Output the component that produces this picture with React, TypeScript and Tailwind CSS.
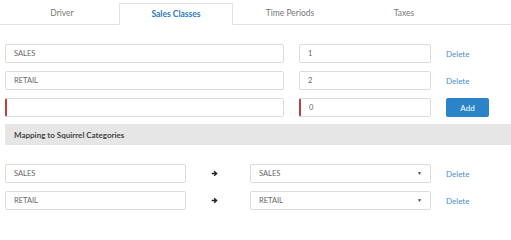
import React from "react";

const tabs = ["Driver", "Sales Classes", "Time Periods", "Taxes"];

const classes = [
    { name: "SALES", order: "1" },
    { name: "RETAIL", order: "2" },
];

const Field = ({ value, invalid, className }: { value: string; invalid?: boolean; className: string }) => (
    <div
        className={
            "h-[19px] flex items-center px-[8px] bg-white border border-[#dcdcdc] rounded-[2px] text-[7.5px] text-[#666] " +
            (invalid ? "border-l-2 border-l-[#b9413f] " : "") +
            className
        }
    >
        {value}
    </div>
);

const App = () => {
    return (
        <div className="w-[511px] h-[212px] bg-white overflow-hidden" style={{ fontFamily: "Lato, 'Open Sans', sans-serif" }}>
            <div className="flex pl-[5px] pt-[3px] border-b border-[#e2e2e2] h-[25px]">
                {tabs.map((t, i) => (
                    <div
                        key={t}
                        className={
                            "w-[114px] flex items-center justify-center text-[8.5px] " +
                            (i === 1
                                ? "border border-[#e2e2e2] border-b-white bg-white -mb-px text-[#2a7bbf] font-bold"
                                : "text-[#777]")
                        }
                    >
                        {t}
                    </div>
                ))}
            </div>

            <div className="pl-[5px] pt-[19px] flex flex-col gap-[8px]">
                {classes.map((c) => (
                    <div key={c.name} className="flex items-center">
                        <Field value={c.name} className="w-[279px]" />
                        <Field value={c.order} className="w-[132px] ml-[15px]" />
                        <a href="#" className="ml-[15px] text-[8px] text-[#4a90cf]">Delete</a>
                    </div>
                ))}
                <div className="flex items-center">
                    <Field value="" invalid className="w-[279px]" />
                    <Field value="0" invalid className="w-[132px] ml-[15px]" />
                    <button className="ml-[15px] w-[43px] h-[19px] rounded-[2px] bg-[#2a84c7] text-white text-[8px]">Add</button>
                </div>
            </div>

            <div className="ml-[5px] mt-[7px] h-[21px] bg-[#e6e6e6] flex items-center pl-[9px] text-[8px] font-bold text-[#444]">
                Mapping to Squirrel Categories
            </div>

            <div className="pl-[5px] pt-[19px] flex flex-col gap-[8px]">
                {classes.map((c) => (
                    <div key={c.name} className="flex items-center">
                        <Field value={c.name} className="w-[181px]" />
                        <div className="w-[64px] flex pl-[25px]">
                            <svg width="7" height="7" viewBox="0 0 10 10">
                                <path d="M1 5h6M4.5 1.8 8 5 4.5 8.2" fill="none" stroke="#222" strokeWidth="2" />
                            </svg>
                        </div>
                        <div className="w-[181px] h-[19px] flex items-center justify-between px-[8px] border border-[#dcdcdc] rounded-[2px] text-[7.5px] text-[#666]">
                            <span>{c.name}</span>
                            <span className="text-[5px] text-[#444]">▼</span>
                        </div>
                        <a href="#" className="ml-[15px] text-[8px] text-[#4a90cf]">Delete</a>
                    </div>
                ))}
            </div>
        </div>
    );
};

export default App;
